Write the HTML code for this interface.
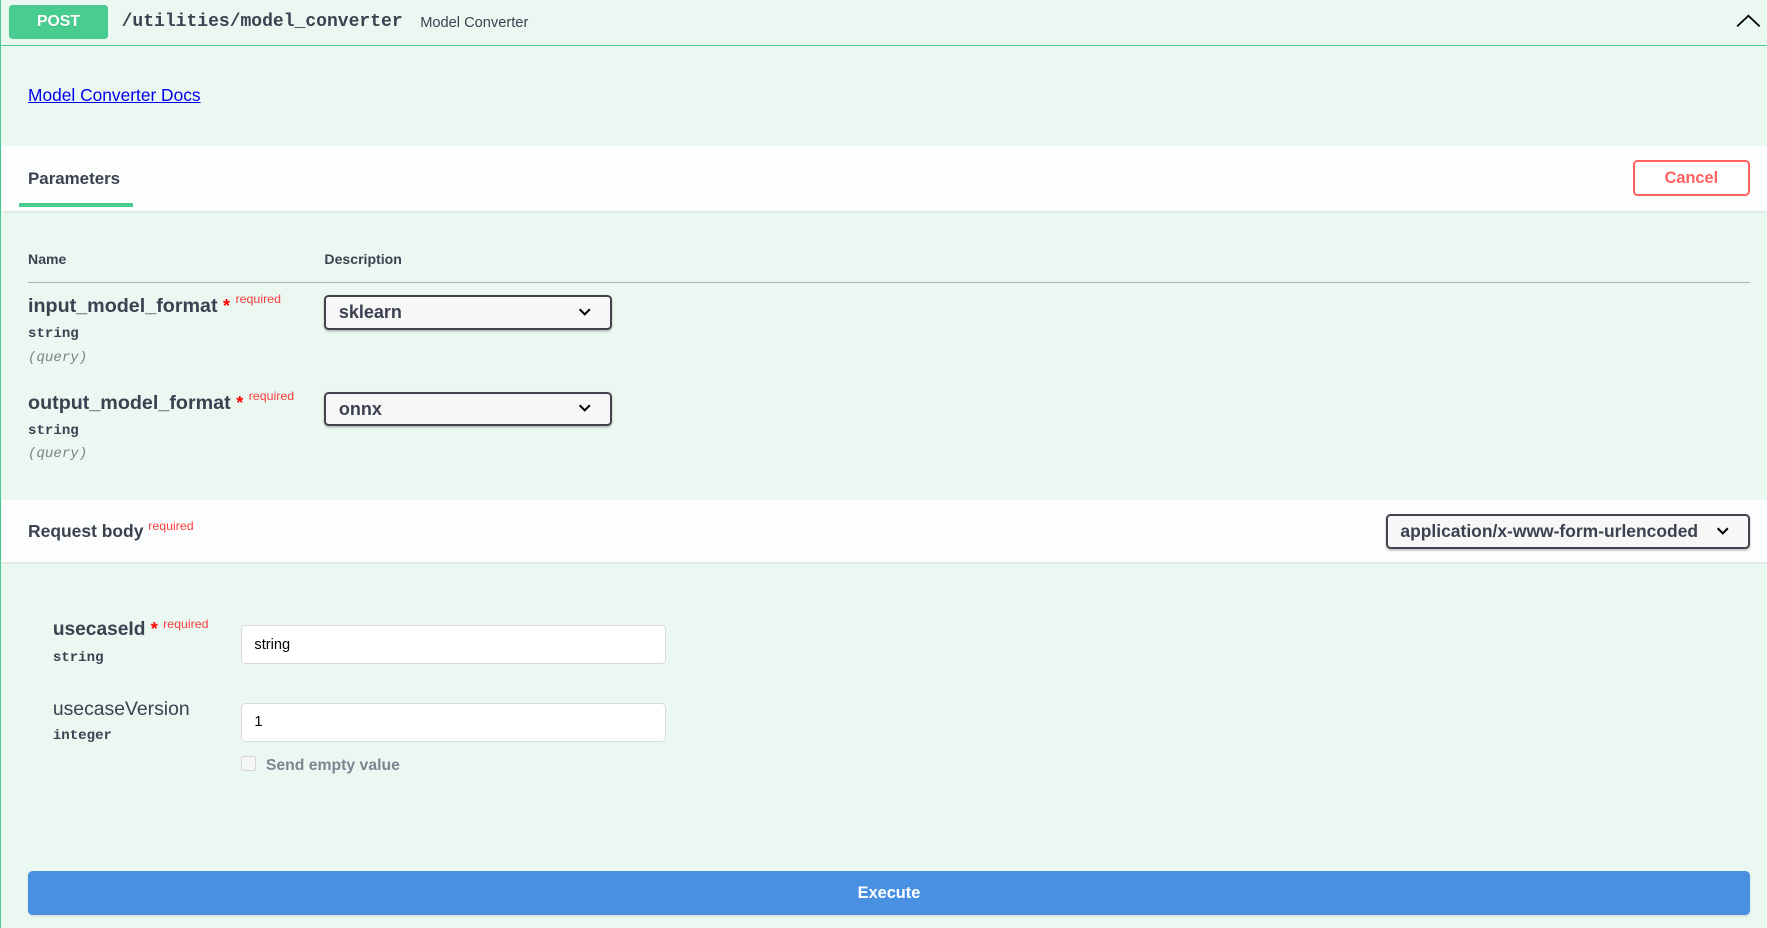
<!DOCTYPE html>
<html><head><meta charset="utf-8"><style>
html,body{margin:0;padding:0;width:1767px;height:928px;overflow:hidden;background:#ebf8f1;}
#w{position:relative;width:1568px;height:824px;zoom:1.12692;font-family:"Liberation Sans",sans-serif;color:#3b4151;background:#ebf8f1;border-left:1px solid #49cc90;box-sizing:border-box;}
.a{position:absolute;white-space:nowrap;}
.mono{font-family:"Liberation Mono","DejaVu Sans Mono",monospace;}
.band{position:absolute;left:0;width:1568px;background:rgba(255,255,255,.85);box-shadow:0 1px 2px rgba(0,0,0,.1);}
.sel{position:absolute;background:#f7f7f7;border:2px solid #41444e;border-radius:4px;box-sizing:border-box;font-weight:bold;font-size:16px;padding-left:11px;display:flex;align-items:center;box-shadow:0 1px 2px rgba(0,0,0,.25);}
.chev{position:absolute;right:16px;top:50%;margin-top:-5px;}
.req{color:#f93e3e;font-size:11px;}
.inp{position:absolute;background:#fff;border:1px solid #d9d9d9;border-radius:4px;box-sizing:border-box;font-size:13px;padding-left:11px;display:flex;align-items:center;color:#000;}
</style></head><body><div id="w">
<div class="a" style="left:0;top:0;width:1568px;height:41px;border-bottom:1px solid #49cc90;box-sizing:border-box;"></div>
<div class="a" style="left:7px;top:4px;width:88px;height:31px;background:#49cc90;border-radius:3px;color:#fff;font-weight:bold;font-size:14px;text-align:center;line-height:31px;text-shadow:0 1px 0 rgba(0,0,0,.1);">POST</div>
<div class="a mono" style="left:107px;top:11px;font-size:16px;font-weight:bold;">/utilities/model_converter</div>
<div class="a" style="left:372px;top:13px;font-size:13px;">Model Converter</div>
<svg class="a" style="left:1540px;top:12px" width="22" height="12" viewBox="0 0 22 12"><path d="M1 11L11 1.5L21 11" fill="none" stroke="#000" stroke-width="1.6"/></svg>
<div class="a" style="left:24px;top:75px;font-size:15.4px;color:#00e;text-decoration:underline;">Model Converter Docs</div>
<div class="band" style="top:130px;height:57px;"></div>
<div class="a" style="left:24px;top:150px;font-size:15px;font-weight:bold;">Parameters</div>
<div class="a" style="left:16px;top:180px;width:101px;height:4px;background:#49cc90;"></div>
<div class="a" style="left:1448px;top:142px;width:104px;height:32px;border:2px solid #ff6060;border-radius:4px;box-sizing:border-box;color:#ff6060;font-weight:bold;font-size:14.5px;text-align:center;line-height:29px;background:#fff;">Cancel</div>
<div class="a" style="left:24px;top:223px;font-size:12.5px;font-weight:bold;">Name</div>
<div class="a" style="left:287px;top:223px;font-size:12.5px;font-weight:bold;">Description</div>
<div class="a" style="left:24px;top:250px;width:1528px;height:1px;background:#a9b2b6;"></div>
<div class="a" style="left:24px;top:262px;font-size:17.5px;font-weight:bold;">input_model_format <span style="color:red;font-size:16px">*</span> <span class="req" style="position:relative;top:-8px;font-weight:normal;">required</span></div>
<div class="a mono" style="left:24px;top:289px;font-size:12.5px;font-weight:bold;">string</div>
<div class="a mono" style="left:24px;top:311px;font-size:12.5px;font-style:italic;color:#808080;">(query)</div>
<div class="sel" style="left:287px;top:262px;width:255px;height:31px;">sklearn<svg class="chev" width="12" height="9" viewBox="0 0 12 9"><path d="M1.5 2L6 6.5L10.5 2" fill="none" stroke="#000" stroke-width="1.8"/></svg></div>
<div class="a" style="left:24px;top:348px;font-size:17.5px;font-weight:bold;">output_model_format <span style="color:red;font-size:16px">*</span> <span class="req" style="position:relative;top:-8px;font-weight:normal;">required</span></div>
<div class="a mono" style="left:24px;top:375px;font-size:12.5px;font-weight:bold;">string</div>
<div class="a mono" style="left:24px;top:396px;font-size:12.5px;font-style:italic;color:#808080;">(query)</div>
<div class="sel" style="left:287px;top:348px;width:255px;height:30px;">onnx<svg class="chev" width="12" height="9" viewBox="0 0 12 9"><path d="M1.5 2L6 6.5L10.5 2" fill="none" stroke="#000" stroke-width="1.8"/></svg></div>
<div class="band" style="top:444px;height:55px;"></div>
<div class="a" style="left:24px;top:462px;font-size:15.5px;font-weight:bold;">Request body <span class="req" style="position:relative;top:-6px;font-weight:normal;">required</span></div>
<div class="sel" style="left:1229px;top:456px;width:323px;height:31px;font-size:15.5px;">application/x-www-form-urlencoded<svg class="chev" width="12" height="9" viewBox="0 0 12 9"><path d="M1.5 2L6 6.5L10.5 2" fill="none" stroke="#000" stroke-width="1.8"/></svg></div>
<div class="a" style="left:46px;top:549px;font-size:17px;font-weight:bold;">usecaseId <span style="color:red;font-size:16px">*</span> <span class="req" style="position:relative;top:-6px;font-weight:normal;">required</span></div>
<div class="a mono" style="left:46px;top:577px;font-size:12.5px;font-weight:bold;">string</div>
<div class="inp" style="left:213px;top:555px;width:377px;height:34px;">string</div>
<div class="a" style="left:46px;top:619px;font-size:17.2px;">usecaseVersion</div>
<div class="a mono" style="left:46px;top:646px;font-size:12.5px;font-weight:bold;">integer</div>
<div class="inp" style="left:213px;top:624px;width:377px;height:34px;">1</div>
<div class="a" style="left:213px;top:671px;width:13px;height:13px;border:1px solid #d5d5d5;border-radius:2px;background:#f3f6f4;box-sizing:border-box;"></div>
<div class="a" style="left:235px;top:672px;font-size:14px;font-weight:bold;color:#7d8492;">Send empty value</div>
<div class="a" style="left:24px;top:773px;width:1528px;height:39px;background:#4990e2;border-radius:4px;color:#fff;font-weight:bold;font-size:14.5px;text-align:center;line-height:40px;box-shadow:0 1px 2px rgba(0,0,0,.1);">Execute</div>
</div></body></html>
